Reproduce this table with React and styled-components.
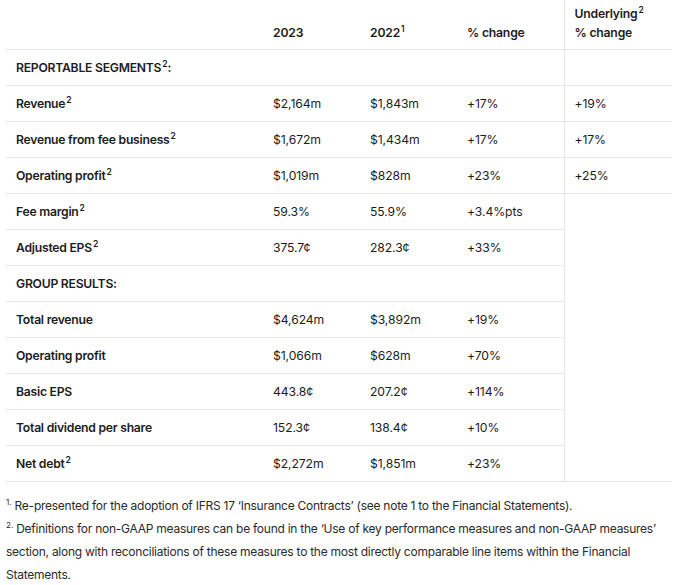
import React from "react";
import styled, { createGlobalStyle } from "styled-components";

const Global = createGlobalStyle`
  html, body { margin: 0; padding: 0; background: #ffffff; }
  body {
    font-family: Inter, "Noto Sans", "Liberation Sans", sans-serif;
    color: #1c1c1c;
    -webkit-font-smoothing: antialiased;
  }
`;

const Page = styled.div`
  padding: 0 8px 0 6px;
  width: 666px;
`;

const Table = styled.table`
  width: 666px;
  border-collapse: collapse;
  table-layout: fixed;
  font-size: 12.2px;
  line-height: 19px;
`;

const HeadCell = styled.th`
  height: 42px;
  padding: 0 10px 7px;
  text-align: left;
  vertical-align: bottom;
  font-weight: 600;
  letter-spacing: -0.2px;
  border-bottom: 1px solid #e6e6e6;
  border-left: ${(p) => (p.$divider ? "1px solid #e6e6e6" : "none")};
`;

const Row = styled.tr``;

const LabelCell = styled.td`
  height: 35px;
  padding: 0 10px;
  vertical-align: middle;
  font-weight: 600;
  letter-spacing: -0.25px;
  border-bottom: 1px solid #e6e6e6;
  white-space: nowrap;
`;

const ValueCell = styled.td`
  height: 35px;
  padding: 0 10px;
  vertical-align: middle;
  font-weight: 400;
  letter-spacing: -0.1px;
  border-bottom: 1px solid #e6e6e6;
  border-left: ${(p) => (p.$divider ? "1px solid #e6e6e6" : "none")};
  white-space: nowrap;
`;

const Sup = styled.sup`
  font-size: 8.5px;
  line-height: 0;
  vertical-align: 0;
  position: relative;
  top: -5px;
  margin-left: 1px;
  letter-spacing: 0;
`;

const Notes = styled.div`
  padding-top: 12px;
  font-size: 12px;
  letter-spacing: -0.25px;
  line-height: 23px;
  color: #2a2a2a;
`;

const Note = styled.p`
  margin: 0;
`;

const NoteMark = styled.span`
  display: inline-block;
  font-size: 8px;
  line-height: 8px;
  vertical-align: 5px;
  margin-right: 3px;
  letter-spacing: 0;
`;

const rows = [
  { label: "REPORTABLE SEGMENTS", sup: true, colon: true, section: true },
  { label: "Revenue", sup: true, v: ["$2,164m", "$1,843m", "+17%"], u: "+19%" },
  { label: "Revenue from fee business", sup: true, v: ["$1,672m", "$1,434m", "+17%"], u: "+17%" },
  { label: "Operating profit", sup: true, v: ["$1,019m", "$828m", "+23%"], u: "+25%" },
  { label: "Fee margin", sup: true, v: ["59.3%", "55.9%", "+3.4%pts"], span: 8 },
  { label: "Adjusted EPS", sup: true, v: ["375.7¢", "282.3¢", "+33%"] },
  { label: "GROUP RESULTS", colon: true, section: true },
  { label: "Total revenue", v: ["$4,624m", "$3,892m", "+19%"] },
  { label: "Operating profit", v: ["$1,066m", "$628m", "+70%"] },
  { label: "Basic EPS", v: ["443.8¢", "207.2¢", "+114%"] },
  { label: "Total dividend per share", v: ["152.3¢", "138.4¢", "+10%"] },
  { label: "Net debt", sup: true, v: ["$2,272m", "$1,851m", "+23%"] },
];

export default function App() {
  let spanned = false;
  return (
    <Page>
      <Global />
      <Table>
        <colgroup>
          <col style={{ width: 257 }} />
          <col style={{ width: 97 }} />
          <col style={{ width: 97 }} />
          <col style={{ width: 107 }} />
          <col style={{ width: 108 }} />
        </colgroup>
        <thead>
          <tr>
            <HeadCell />
            <HeadCell>2023</HeadCell>
            <HeadCell>
              2022<Sup>1</Sup>
            </HeadCell>
            <HeadCell>% change</HeadCell>
            <HeadCell $divider>
              Underlying<Sup>2</Sup>
              <br />% change
            </HeadCell>
          </tr>
        </thead>
        <tbody>
          {rows.map((r, i) => {
            let uCell = null;
            if (r.span) {
              spanned = true;
              uCell = <ValueCell $divider rowSpan={r.span} />;
            } else if (!spanned) {
              uCell = <ValueCell $divider>{r.u || ""}</ValueCell>;
            }
            if (r.section) {
              return (
                <Row key={i}>
                  <LabelCell colSpan={4}>
                    {r.label}
                    {r.sup && <Sup>2</Sup>}
                    {r.colon ? ":" : ""}
                  </LabelCell>
                  {uCell}
                </Row>
              );
            }
            return (
              <Row key={i}>
                <LabelCell>
                  {r.label}
                  {r.sup && <Sup>2</Sup>}
                </LabelCell>
                {r.v.map((x, j) => (
                  <ValueCell key={j}>{x}</ValueCell>
                ))}
                {uCell}
              </Row>
            );
          })}
        </tbody>
      </Table>
      <Notes>
        <Note>
          <NoteMark>1.</NoteMark>Re-presented for the adoption of IFRS 17 ‘Insurance Contracts’ (see note 1 to the Financial Statements).
        </Note>
        <Note>
          <NoteMark>2.</NoteMark>Definitions for non-GAAP measures can be found in the ‘Use of key performance measures and non-GAAP measures’
          section, along with reconciliations of these measures to the most directly comparable line items within the Financial Statements.
        </Note>
      </Notes>
    </Page>
  );
}
